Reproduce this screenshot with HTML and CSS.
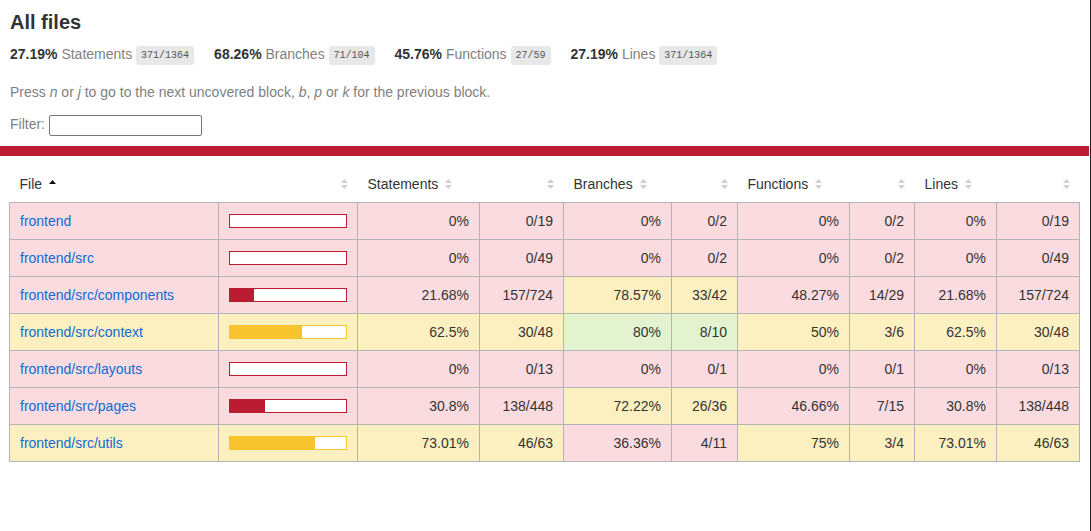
FILE: index.html
```html
<!doctype html>
<html lang="en">
<head>
<meta charset="utf-8">
<title>Code coverage report for All files</title>
<link rel="stylesheet" href="styles.css">
</head>
<body>
<div class="wrapper">
  <div class="pad1">
    <h1>All files</h1>
    <div class="clearfix">
      <div class="fl pad1y space-right2">
        <span class="strong">27.19% </span>
        <span class="quiet">Statements</span>
        <span class="fraction">371/1364</span>
      </div>
      <div class="fl pad1y space-right2">
        <span class="strong">68.26% </span>
        <span class="quiet">Branches</span>
        <span class="fraction">71/104</span>
      </div>
      <div class="fl pad1y space-right2">
        <span class="strong">45.76% </span>
        <span class="quiet">Functions</span>
        <span class="fraction">27/59</span>
      </div>
      <div class="fl pad1y space-right2">
        <span class="strong">27.19% </span>
        <span class="quiet">Lines</span>
        <span class="fraction">371/1364</span>
      </div>
    </div>
    <p class="quiet">Press <em>n</em> or <em>j</em> to go to the next uncovered block, <em>b</em>, <em>p</em> or <em>k</em> for the previous block.</p>
    <div class="quiet filter">Filter: <input type="search" class="file-search"></div>
  </div>
  <div class="status-line low"></div>
  <div class="pad1 table-pad">
    <table class="coverage-summary">
      <colgroup>
        <col class="c-file"><col class="c-pic">
        <col class="c-s-pct"><col class="c-s-abs">
        <col class="c-b-pct"><col class="c-b-abs">
        <col class="c-f-pct"><col class="c-f-abs">
        <col class="c-l-pct"><col class="c-l-abs">
      </colgroup>
      <thead>
        <tr>
          <th class="file sorted">File<span class="sorter"><svg width="7" height="10" viewBox="0 0 7 10"><path d="M0 5 L3.5 1 L7 5 Z" fill="#111"/></svg></span></th>
          <th class="pic"><span class="sorter"><svg width="7" height="10" viewBox="0 0 7 10"><path d="M0 4 L3.5 0 L7 4 Z M0 6 L7 6 L3.5 10 Z" fill="#cfcfcf"/></svg></span></th>
          <th class="pct">Statements<span class="sorter"><svg width="7" height="10" viewBox="0 0 7 10"><path d="M0 4 L3.5 0 L7 4 Z M0 6 L7 6 L3.5 10 Z" fill="#cfcfcf"/></svg></span></th>
          <th class="abs"><span class="sorter"><svg width="7" height="10" viewBox="0 0 7 10"><path d="M0 4 L3.5 0 L7 4 Z M0 6 L7 6 L3.5 10 Z" fill="#cfcfcf"/></svg></span></th>
          <th class="pct">Branches<span class="sorter"><svg width="7" height="10" viewBox="0 0 7 10"><path d="M0 4 L3.5 0 L7 4 Z M0 6 L7 6 L3.5 10 Z" fill="#cfcfcf"/></svg></span></th>
          <th class="abs"><span class="sorter"><svg width="7" height="10" viewBox="0 0 7 10"><path d="M0 4 L3.5 0 L7 4 Z M0 6 L7 6 L3.5 10 Z" fill="#cfcfcf"/></svg></span></th>
          <th class="pct">Functions<span class="sorter"><svg width="7" height="10" viewBox="0 0 7 10"><path d="M0 4 L3.5 0 L7 4 Z M0 6 L7 6 L3.5 10 Z" fill="#cfcfcf"/></svg></span></th>
          <th class="abs"><span class="sorter"><svg width="7" height="10" viewBox="0 0 7 10"><path d="M0 4 L3.5 0 L7 4 Z M0 6 L7 6 L3.5 10 Z" fill="#cfcfcf"/></svg></span></th>
          <th class="pct">Lines<span class="sorter"><svg width="7" height="10" viewBox="0 0 7 10"><path d="M0 4 L3.5 0 L7 4 Z M0 6 L7 6 L3.5 10 Z" fill="#cfcfcf"/></svg></span></th>
          <th class="abs"><span class="sorter"><svg width="7" height="10" viewBox="0 0 7 10"><path d="M0 4 L3.5 0 L7 4 Z M0 6 L7 6 L3.5 10 Z" fill="#cfcfcf"/></svg></span></th>
        </tr>
      </thead>
      <tbody>
        <tr>
          <td class="file low"><a href="#">frontend</a></td>
          <td class="pic low"><div class="chart"><div class="cover-fill" style="width: 0%"></div><div class="cover-empty" style="width: 100%"></div></div></td>
          <td class="pct low">0%</td><td class="abs low">0/19</td>
          <td class="pct low">0%</td><td class="abs low">0/2</td>
          <td class="pct low">0%</td><td class="abs low">0/2</td>
          <td class="pct low">0%</td><td class="abs low">0/19</td>
        </tr>
        <tr>
          <td class="file low"><a href="#">frontend/src</a></td>
          <td class="pic low"><div class="chart"><div class="cover-fill" style="width: 0%"></div><div class="cover-empty" style="width: 100%"></div></div></td>
          <td class="pct low">0%</td><td class="abs low">0/49</td>
          <td class="pct low">0%</td><td class="abs low">0/2</td>
          <td class="pct low">0%</td><td class="abs low">0/2</td>
          <td class="pct low">0%</td><td class="abs low">0/49</td>
        </tr>
        <tr>
          <td class="file low"><a href="#">frontend/src/components</a></td>
          <td class="pic low"><div class="chart"><div class="cover-fill" style="width: 21%"></div><div class="cover-empty" style="width: 79%"></div></div></td>
          <td class="pct low">21.68%</td><td class="abs low">157/724</td>
          <td class="pct medium">78.57%</td><td class="abs medium">33/42</td>
          <td class="pct low">48.27%</td><td class="abs low">14/29</td>
          <td class="pct low">21.68%</td><td class="abs low">157/724</td>
        </tr>
        <tr>
          <td class="file medium"><a href="#">frontend/src/context</a></td>
          <td class="pic medium"><div class="chart"><div class="cover-fill" style="width: 62%"></div><div class="cover-empty" style="width: 38%"></div></div></td>
          <td class="pct medium">62.5%</td><td class="abs medium">30/48</td>
          <td class="pct high">80%</td><td class="abs high">8/10</td>
          <td class="pct medium">50%</td><td class="abs medium">3/6</td>
          <td class="pct medium">62.5%</td><td class="abs medium">30/48</td>
        </tr>
        <tr>
          <td class="file low"><a href="#">frontend/src/layouts</a></td>
          <td class="pic low"><div class="chart"><div class="cover-fill" style="width: 0%"></div><div class="cover-empty" style="width: 100%"></div></div></td>
          <td class="pct low">0%</td><td class="abs low">0/13</td>
          <td class="pct low">0%</td><td class="abs low">0/1</td>
          <td class="pct low">0%</td><td class="abs low">0/1</td>
          <td class="pct low">0%</td><td class="abs low">0/13</td>
        </tr>
        <tr>
          <td class="file low"><a href="#">frontend/src/pages</a></td>
          <td class="pic low"><div class="chart"><div class="cover-fill" style="width: 30%"></div><div class="cover-empty" style="width: 70%"></div></div></td>
          <td class="pct low">30.8%</td><td class="abs low">138/448</td>
          <td class="pct medium">72.22%</td><td class="abs medium">26/36</td>
          <td class="pct low">46.66%</td><td class="abs low">7/15</td>
          <td class="pct low">30.8%</td><td class="abs low">138/448</td>
        </tr>
        <tr>
          <td class="file medium"><a href="#">frontend/src/utils</a></td>
          <td class="pic medium"><div class="chart"><div class="cover-fill" style="width: 73%"></div><div class="cover-empty" style="width: 27%"></div></div></td>
          <td class="pct medium">73.01%</td><td class="abs medium">46/63</td>
          <td class="pct low">36.36%</td><td class="abs low">4/11</td>
          <td class="pct medium">75%</td><td class="abs medium">3/4</td>
          <td class="pct medium">73.01%</td><td class="abs medium">46/63</td>
        </tr>
      </tbody>
    </table>
  </div>
</div>
</body>
</html>
```

FILE: styles.css
```css
*, *::before, *::after { box-sizing: border-box; }
html, body { margin: 0; padding: 0; height: 100%; }
body {
  font-family: "Liberation Sans", Arial, Helvetica, sans-serif;
  font-size: 14px;
  color: #333;
  background: #fff;
  border-right: 1px solid #1e1e1e;
  padding-right: 1px;
}
h1 { font-size: 20px; margin: 0; font-weight: bold; line-height: 24px; }
a { color: #0d6bd3; text-decoration: none; }
.strong { font-weight: bold; }
.pad1 { padding: 10px; }
.pad1y { padding: 12px 0 8px; }
.space-right2 { padding-right: 20px; }
.clearfix::after { content: ""; display: block; clear: both; }
.fl { float: left; }
.quiet { color: #7f7f7f; }
p { margin: 14px 0 14px; }
.fraction {
  font-family: "Liberation Mono", "DejaVu Sans Mono", monospace;
  font-size: 10px;
  color: #555;
  background: #e8e8e8;
  padding: 4px 5px;
  border-radius: 3px;
  vertical-align: middle;
}
.filter { line-height: 20px; }
.file-search {
  width: 153px;
  height: 21px;
  border: 1px solid #767676;
  border-radius: 2px;
  padding: 1px 2px;
  font: 13px "Liberation Sans", Arial, sans-serif;
  vertical-align: middle;
  background: #fff;
}
.status-line { height: 10px; }
.status-line.low { background: #bb1c32; }

.table-pad { padding: 10px 11px 10px 9px; }
.coverage-summary {
  border-collapse: collapse;
  width: 100%;
  table-layout: fixed;
}
.c-file { width: 209px; }
.c-pic { width: 139px; }
.c-s-pct { width: 122px; }
.c-s-abs { width: 84px; }
.c-b-pct { width: 108px; }
.c-b-abs { width: 66px; }
.c-f-pct { width: 112px; }
.c-f-abs { width: 65px; }
.c-l-pct { width: 82px; }
.c-l-abs { width: 83px; }

.coverage-summary tr { border-bottom: 1px solid #b4b4b4; }
.coverage-summary tbody { border: 1px solid #b4b4b4; }
.coverage-summary td, .coverage-summary th { padding: 10px; line-height: 16px; }
.coverage-summary td { border-right: 1px solid #b4b4b4; }
.coverage-summary td:last-child { border-right: none; }
.coverage-summary th { text-align: left; font-weight: normal; white-space: nowrap; }
.coverage-summary th.pic, .coverage-summary th.abs,
.coverage-summary td.pct, .coverage-summary td.abs { text-align: right; }
.coverage-summary td.file { white-space: nowrap; }
.sorter {
  display: inline-block;
  width: 7px;
  height: 10px;
  margin-left: 0.5em;
  line-height: 0;
}
.sorter svg { display: block; }

.low { background: #fadce0; }
.medium { background: #fdf0c0; }
.high { background: #e3f3d0; }

.chart { line-height: 0; }
.cover-fill, .cover-empty { display: inline-block; height: 12px; }
.cover-empty { background: #fff; }
.low .chart { border: 1px solid #bb1c32; }
.low .cover-fill { background: #bb1c32; }
.medium .chart { border: 1px solid #f8c42e; }
.medium .cover-fill { background: #f8c42e; }
```
